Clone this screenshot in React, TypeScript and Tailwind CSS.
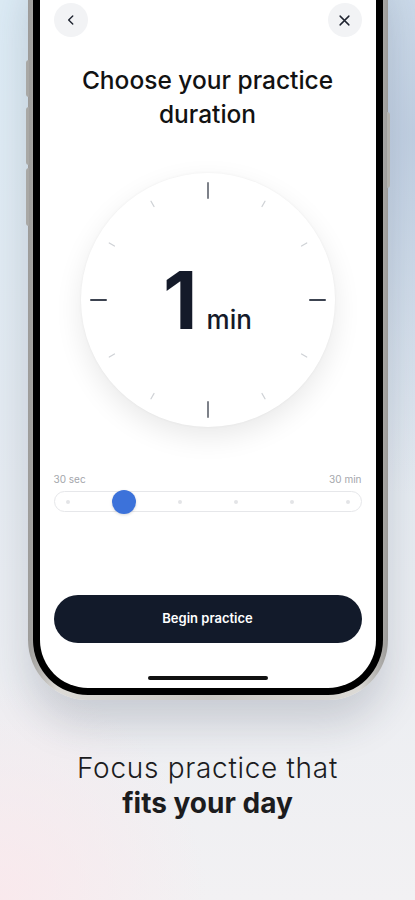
import React from "react";

const font = { fontFamily: "Inter, 'Noto Sans', sans-serif" };

function Ticks() {
  const c = 127;
  const items: React.ReactNode[] = [];
  for (let i = 0; i < 12; i++) {
    const a = (i * 30 * Math.PI) / 180;
    const major = i % 3 === 0;
    const r1 = major ? 102 : 108;
    const r2 = major ? 117 : 114;
    const x1 = c + r1 * Math.sin(a);
    const y1 = c - r1 * Math.cos(a);
    const x2 = c + r2 * Math.sin(a);
    const y2 = c - r2 * Math.cos(a);
    const side = i === 3 || i === 9;
    items.push(
      <line
        key={i}
        x1={x1}
        y1={y1}
        x2={x2}
        y2={y2}
        stroke={major ? (side ? "#3c4350" : "#7d8189") : "#cfd2d6"}
        strokeWidth={major ? 2 : 1.3}
        strokeLinecap="round"
      />
    );
  }
  return (
    <svg width="254" height="254" viewBox="0 0 254 254" className="block">
      {items}
    </svg>
  );
}

export default function App() {
  return (
    <div
      className="relative w-[415px] h-[900px] overflow-hidden bg-[radial-gradient(ellipse_60%_40%_at_100%_15%,rgba(190,205,225,0.9),rgba(190,205,225,0)),radial-gradient(ellipse_50%_25%_at_0%_100%,rgba(250,232,236,0.9),rgba(250,232,236,0)),linear-gradient(180deg,#dcebf5_0%,#e4ebf2_45%,#eceef2_75%,#f2f1f3_100%)]"
      style={font}
    >
      {/* Phone */}
      <div className="relative mx-auto mt-[-60px] w-[360px] rounded-[60px] bg-[linear-gradient(90deg,#9c9b99,#dcdad6_8%,#c9c7c3_50%,#dcdad6_92%,#9c9b99)] p-[5px] shadow-[0_24px_40px_rgba(40,50,70,0.18)]">
        {/* side buttons */}
        <div className="absolute left-[-2px] top-[120px] h-[37px] w-[3px] rounded-l-sm bg-[#a9a8a5]" />
        <div className="absolute left-[-2px] top-[167px] h-[58px] w-[3px] rounded-l-sm bg-[#a9a8a5]" />
        <div className="absolute left-[-2px] top-[228px] h-[58px] w-[3px] rounded-l-sm bg-[#a9a8a5]" />
        <div className="absolute right-[-2px] top-[172px] h-[76px] w-[3px] rounded-r-sm bg-[#b3b2ae]" />
        <div className="rounded-[55px] bg-black p-[7px]">
          <div className="flex flex-col rounded-[48px] bg-white px-[14px] pt-[51px] pb-[8px]">
            {/* top bar */}
            <div className="flex items-center justify-between">
              <div className="flex h-[34px] w-[34px] items-center justify-center rounded-full bg-[#f2f3f5]">
                <svg width="14" height="14" viewBox="0 0 24 24" fill="none" stroke="#1f2430" strokeWidth="2.4" strokeLinecap="round" strokeLinejoin="round">
                  <path d="M15 5l-7 7 7 7" />
                </svg>
              </div>
              <div className="flex h-[34px] w-[34px] items-center justify-center rounded-full bg-[#f2f3f5]">
                <svg width="15" height="15" viewBox="0 0 24 24" fill="none" stroke="#1f2430" strokeWidth="2.3" strokeLinecap="round">
                  <path d="M5 5l14 14M19 5L5 19" />
                </svg>
              </div>
            </div>
            {/* title */}
            <h1 className="mt-[26px] text-center text-[24.5px] leading-[34px] font-medium text-[#121212]">
              Choose your practice
              <br />
              duration
            </h1>
            {/* clock */}
            <div className="relative mx-auto mt-[42px] h-[254px] w-[254px] rounded-full bg-white shadow-[0_10px_28px_rgba(0,0,0,0.09),0_0_3px_rgba(0,0,0,0.05)]">
              <Ticks />
              <div className="absolute inset-0 flex items-center justify-center">
                <div className="flex items-baseline">
                  <span className="text-[80px] leading-none font-bold text-[#141a29]">1</span>
                  <span className="ml-[9px] text-[26px] leading-none font-medium text-[#141a29]">min</span>
                </div>
              </div>
            </div>
            {/* slider */}
            <div className="mt-[46px] flex justify-between text-[10px] leading-[12px] text-[#a3a6ab]">
              <span>30 sec</span>
              <span>30 min</span>
            </div>
            <div className="mt-[6px] flex h-[21px] items-center justify-between rounded-full border border-[#e6e7ea] bg-white px-[11px]">
              <span className="h-[4px] w-[4px] rounded-full bg-[#e3e4e7]" />
              <span className="relative h-[4px] w-[4px]">
                <span className="absolute left-1/2 top-1/2 h-[24px] w-[24px] -translate-x-1/2 -translate-y-1/2 rounded-full bg-[#3c72da] shadow-[0_1px_3px_rgba(0,0,0,0.15)]" />
              </span>
              <span className="h-[4px] w-[4px] rounded-full bg-[#e3e4e7]" />
              <span className="h-[4px] w-[4px] rounded-full bg-[#e3e4e7]" />
              <span className="h-[4px] w-[4px] rounded-full bg-[#e3e4e7]" />
              <span className="h-[4px] w-[4px] rounded-full bg-[#e3e4e7]" />
            </div>
            {/* button */}
            <button className="mt-[83px] flex h-[48px] w-full items-center justify-center rounded-full bg-[#121a2a] text-[13px] font-semibold text-white">
              Begin practice
            </button>
            {/* home indicator */}
            <div className="mx-auto mt-[33px] h-[4px] w-[120px] rounded-full bg-[#111]" />
          </div>
        </div>
      </div>
      {/* tagline */}
      <div className="mt-[51px] text-center text-[28px] leading-[35px] text-[#1c1c1e]">
        <div className="font-light tracking-[0.7px]">Focus practice that</div>
        <div className="font-bold">fits your day</div>
      </div>
    </div>
  );
}
